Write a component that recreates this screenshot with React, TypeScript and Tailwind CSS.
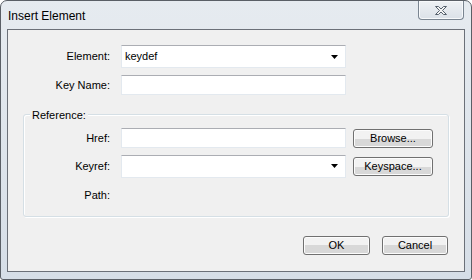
import React from "react";

const font = { fontFamily: '"Liberation Sans", Arial, sans-serif' };

function ComboArrow() {
  return (
    <svg width="7" height="4" viewBox="0 0 7 4" className="shrink-0">
      <path d="M0 0h7L3.5 4z" fill="#000" />
    </svg>
  );
}

function TextBox({ children, combo }: { children?: React.ReactNode; combo?: boolean }) {
  return (
    <div
      className={
        "flex w-[225px] items-center border border-[#e3e9ef] border-t-[#abadb3] bg-white pl-[3px] pr-[7px] text-[11px] text-black " +
        (combo ? "h-[23px]" : "h-[20px]")
      }
    >
      <span className="flex-1">{children}</span>
      {combo && <ComboArrow />}
    </div>
  );
}

function Btn({ label, w }: { label: string; w: string }) {
  return (
    <div
      className={
        "flex h-[19px] items-center justify-center rounded-[3px] border border-[#707070] bg-gradient-to-b from-[#f2f2f2] from-50% to-[#d8d8d8] to-50% text-[11px] text-black shadow-[inset_0_0_0_1px_#fcfcfc] " +
        w
      }
    >
      {label}
    </div>
  );
}

function Label({ text, w }: { text: string; w: string }) {
  return <div className={"shrink-0 text-right text-[11px] text-black " + w}>{text}</div>;
}

function CloseGlyph() {
  return (
    <svg width="14" height="11" viewBox="0 0 14 11">
      <path
        d="M1.5 1.5h3l2.5 2.5 2.5-2.5h3l-4 4 4 4h-3L7 7 4.5 9.5h-3l4-4z"
        fill="#f4f4f4"
        stroke="#55606c"
        strokeWidth="1"
        strokeLinejoin="round"
      />
    </svg>
  );
}

export default function App() {
  return (
    <div style={font} className="h-[280px] w-[472px] bg-white">
      <div className="flex h-[280px] w-[472px] flex-col rounded-t-[7px] rounded-b-[3px] border border-[#5a5f66] bg-gradient-to-b from-[#e6ebf0] to-[#d6dee7] px-[6px] pb-[7px]">
        {/* title bar */}
        <div className="flex h-[28px] shrink-0 items-start">
          <div className="mt-[6px] pl-[1px] text-[12px] text-black">Insert Element</div>
          <div className="ml-auto mr-[1px] flex h-[19px] w-[46px] items-center justify-center rounded-b-[4px] border border-t-0 border-[#7a8591] bg-gradient-to-b from-[#eef1f4] to-[#dbe1e8] shadow-[inset_0_0_0_1px_#f7f9fb]">
            <CloseGlyph />
          </div>
        </div>

        {/* client area */}
        <div className="flex flex-1 flex-col border border-[#6b7078] bg-[#f0f0f0] pt-[15px]">
          <div className="flex h-[23px] items-center">
            <Label text="Element:" w="w-[102px]" />
            <div className="ml-[11px]">
              <TextBox combo>keydef</TextBox>
            </div>
          </div>

          <div className="mt-[7px] flex h-[20px] items-center">
            <Label text="Key Name:" w="w-[102px]" />
            <div className="ml-[11px]">
              <TextBox />
            </div>
          </div>

          {/* Reference group */}
          <div className="relative ml-[15px] mt-[19px] h-[103px] w-[426px] rounded-[3px] border border-[#d5dfe5] shadow-[inset_1px_1px_0_#ffffff,1px_1px_0_#ffffff] pt-[13px]">
            <div className="absolute left-[6px] top-[-8px] bg-[#f0f0f0] px-[2px] text-[11px] text-black">
              Reference:
            </div>
            <div className="flex h-[20px] items-center">
              <Label text="Href:" w="w-[86px]" />
              <div className="ml-[11px]">
                <TextBox />
              </div>
              <Btn label="Browse..." w="ml-[7px] w-[80px]" />
            </div>
            <div className="mt-[8px] flex h-[20px] items-center">
              <Label text="Keyref:" w="w-[86px]" />
              <div className="ml-[11px]">
                <TextBox combo />
              </div>
              <Btn label="Keyspace..." w="ml-[7px] w-[80px]" />
            </div>
            <div className="mt-[9px] flex h-[20px] items-center">
              <Label text="Path:" w="w-[86px]" />
            </div>
          </div>

          <div className="mt-[19px] flex justify-end gap-[12px] pr-[16px]">
            <Btn label="OK" w="w-[67px]" />
            <Btn label="Cancel" w="w-[66px]" />
          </div>
        </div>
      </div>
    </div>
  );
}
